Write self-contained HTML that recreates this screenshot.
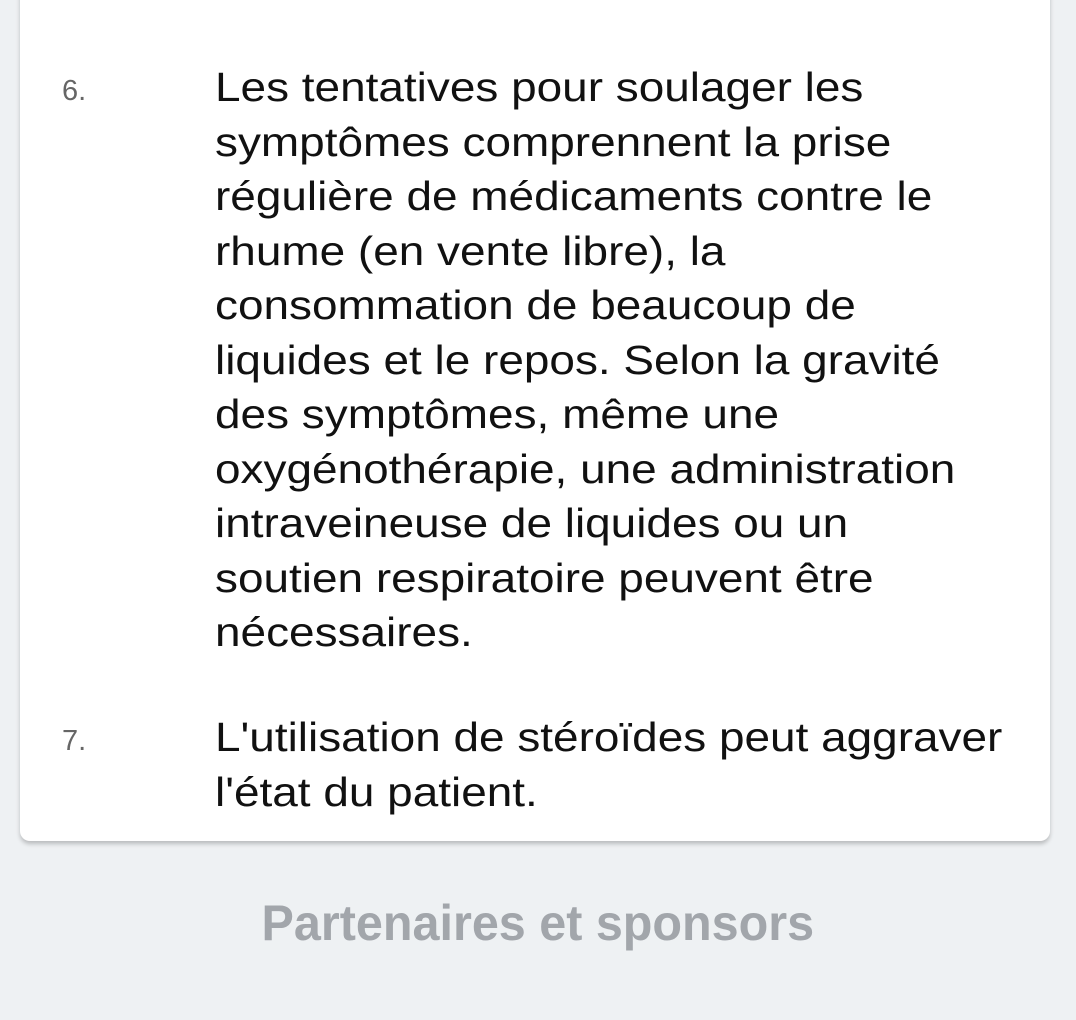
<!DOCTYPE html>
<html><head><meta charset="utf-8"><style>
html,body{margin:0;padding:0;}
body{width:1076px;height:1020px;background:#eef1f3;position:relative;overflow:hidden;font-family:"Liberation Sans",Arial,sans-serif;}
.card{position:absolute;left:20px;top:-20px;width:1030px;height:861px;background:#fff;border-radius:10px;box-shadow:0 3px 4px rgba(0,0,0,0.22);}
.num{position:absolute;left:62px;font-size:29px;color:#666;}
.txt{position:absolute;left:215px;font-size:41px;line-height:54.5px;color:#111;white-space:nowrap;transform:scaleX(1.12);transform-origin:0 0;}
.title{position:absolute;left:0;width:1076px;top:894px;text-align:center;font-weight:bold;font-size:50px;color:#a2a6ab;}
.title span{display:inline-block;transform:scaleX(0.97);}
</style></head><body>
<div class="card"></div>
<div class="num" style="top:75px">6.</div>
<div class="txt" style="top:60px">Les tentatives pour soulager les<br>symptômes comprennent la prise<br>régulière de médicaments contre le<br>rhume (en vente libre), la<br>consommation de beaucoup de<br>liquides et le repos. Selon la gravité<br>des symptômes, même une<br>oxygénothérapie, une administration<br>intraveineuse de liquides ou un<br>soutien respiratoire peuvent être<br>nécessaires.</div>
<div class="num" style="top:725px">7.</div>
<div class="txt" style="top:710px">L'utilisation de stéroïdes peut aggraver<br>l'état du patient.</div>
<div class="title"><span>Partenaires et sponsors</span></div>
</body></html>
